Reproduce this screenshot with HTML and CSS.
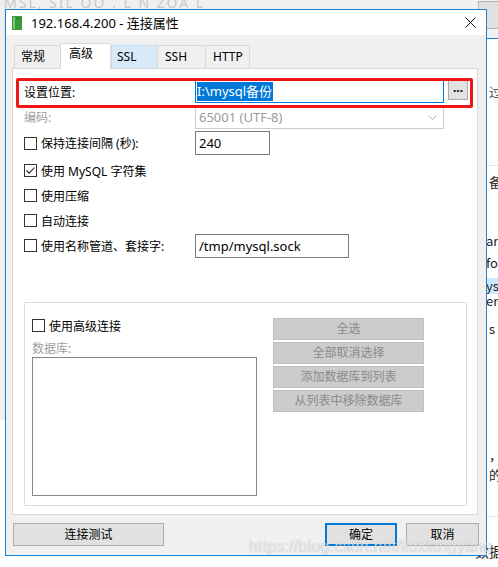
FILE: index.html
```html
<!DOCTYPE html>
<html lang="zh-CN">
<head>
<meta charset="UTF-8">
<title>连接属性</title>
<link rel="stylesheet" href="styles.css">
</head>
<body>

<!-- desktop behind the dialog -->
<div class="bg-top">
  <span class="bg-top-text">MSL, SIL OO . L N ZOA L</span>
  <div class="bg-top-btn"></div>
</div>
<div class="bg-left"></div>
<div class="bg-right">
  <div class="bg-line l1">过</div>
  <div class="bg-sep s1"></div>
  <div class="bg-line l2">备</div>
  <div class="bg-line l3">arc</div>
  <div class="bg-line l4">fo</div>
  <div class="bg-line l5 hl">ys</div>
  <div class="bg-line l6">erf</div>
  <div class="bg-line l7">s</div>
  <div class="bg-line l8">，</div>
  <div class="bg-line l9">的</div>
  <div class="bg-sep s2"></div>
  <div class="bg-line l10">数据</div>
</div>

<div class="dialog">
  <div class="titlebar">
    <svg class="app-icon" width="10" height="14" viewBox="0 0 10 14">
      <rect x="0" y="0" width="10" height="14" fill="#3a9a3a"/>
      <rect x="1" y="1" width="2" height="12" fill="#7cc47c"/>
      <rect x="4" y="2" width="5" height="1" fill="#2b7a2b"/>
    </svg>
    <span class="title">192.168.4.200 - 连接属性</span>
    <svg class="close" width="11" height="11" viewBox="0 0 11 11">
      <path d="M0.5 0.5 L10.5 10.5 M10.5 0.5 L0.5 10.5" stroke="#111" stroke-width="1"/>
    </svg>
  </div>

  <div class="body">
    <div class="tabs">
      <div class="tab t1">常规</div>
      <div class="tab t2 active">高级</div>
      <div class="tab t3 hover">SSL</div>
      <div class="tab t4">SSH</div>
      <div class="tab t5">HTTP</div>
    </div>

    <div class="panel">
      <div class="mark"></div>

      <div class="row r1">
        <span class="label">设置位置:</span>
        <div class="field focus w-long"><span class="sel">I:\mysql备份</span></div>
        <div class="dots">...</div>
      </div>

      <div class="row r2">
        <span class="label dim">编码:</span>
        <div class="field combo w-long">
          <span>65001 (UTF-8)</span>
          <svg width="9" height="5" viewBox="0 0 9 5"><path d="M0.5 0.5 L4.5 4.5 L8.5 0.5" fill="none" stroke="#aaa"/></svg>
        </div>
      </div>

      <div class="row r3">
        <span class="label"><span class="check"></span>保持连接间隔 (秒):</span>
        <div class="field w-short">240</div>
      </div>

      <div class="row r4">
        <span class="label"><span class="check on"><svg width="11" height="11" viewBox="0 0 11 11"><path d="M1.5 5.5 L4.2 8.2 L9.5 2.5" fill="none" stroke="#222" stroke-width="1.1"/></svg></span>使用 MySQL 字符集</span>
      </div>
      <div class="row r5">
        <span class="label"><span class="check"></span>使用压缩</span>
      </div>
      <div class="row r6">
        <span class="label"><span class="check"></span>自动连接</span>
      </div>
      <div class="row r7">
        <span class="label"><span class="check"></span>使用名称管道、套接字:</span>
        <div class="field w-mid">/tmp/mysql.sock</div>
      </div>

      <div class="group">
        <div class="group-left">
          <div class="group-check"><span class="check"></span>使用高级连接</div>
          <div class="db-label">数据库:</div>
          <div class="listbox"></div>
        </div>
        <div class="group-right">
          <div class="gbtn">全选</div>
          <div class="gbtn">全部取消选择</div>
          <div class="gbtn">添加数据库到列表</div>
          <div class="gbtn">从列表中移除数据库</div>
        </div>
      </div>
    </div>

    <div class="footer">
      <div class="btn test">连接测试</div>
      <div class="btn ok">确定</div>
      <div class="btn cancel">取消</div>
    </div>
  </div>
</div>

<div class="watermark">https://blog.csdn.net/liuxiangyang</div>

</body>
</html>
```

FILE: styles.css
```css
html, body {
margin: 0;
padding: 0;
}

body {
position: relative;
width: 498px;
height: 567px;
overflow: hidden;
background: #fff;
font-family: "Noto Sans", "Noto Sans CJK SC", sans-serif;
font-size: 12px;
color: #000;
}

/* Desktop pieces behind the dialog */
.bg-top {
position: absolute;
left: 0;
top: 0;
width: 498px;
height: 38px;
background: #f0f0f0;
border-bottom: 1px solid #1883d7;
}

.bg-top-text {
display: block;
margin: -7px 0 0 4px;
font-size: 14px;
color: #c8c8c8;
letter-spacing: 2px;
}

.bg-top-btn {
position: absolute;
left: 478px;
top: 1px;
width: 22px;
height: 26px;
background: #e1e1e1;
border: 1px solid #b5b5b5;
}

.bg-left {
position: absolute;
left: 0;
top: 0;
width: 4px;
height: 420px;
background: #f0f0f0;
border-right: 1px solid #e3e3e3;
}

.bg-right {
position: absolute;
left: 487px;
top: 39px;
width: 60px;
height: 528px;
font-size: 13px;
font-family: "Noto Sans CJK SC", "Noto Sans", sans-serif;
color: #222;
}

.bg-line {
position: absolute;
left: 2px;
line-height: 16px;
}

.l1 { top: 45px; color: #555; }
.l2 { top: 135px; }
.l3 { top: 194px; left: -1px; }
.l4 { top: 216px; left: -1px; }
.l5 { top: 239px; left: -1px; width: 30px; }
.l6 { top: 254px; left: -1px; }
.l7 { top: 282px; }
.l8 { top: 408px; }
.l9 { top: 428px; }
.l10 { top: 504px; left: -12px; font-size: 14px; }

.hl {
background: #cce8ff;
}

.bg-sep {
position: absolute;
left: 0;
width: 60px;
height: 1px;
background: #e3e3e3;
}

.s1 { top: 126px; }
.s2 { top: 477px; }

/* Dialog window */
.dialog {
position: absolute;
left: 5px;
top: 9px;
width: 480px;
height: 545px;
border: 1px solid #1883d7;
background: #f0f0f0;
}

.titlebar {
display: flex;
align-items: center;
height: 25px;
background: #fff;
}

.app-icon {
margin-left: 6px;
}

.title {
margin-left: 9px;
font-size: 13px;
}

.close {
margin-left: auto;
margin-right: 10px;
}

.body {
padding: 8px 8px 0 6px;
}

/* Tabs */
.tabs {
display: flex;
align-items: flex-end;
height: 25px;
padding-left: 2px;
}

.tab {
position: relative;
box-sizing: border-box;
height: 23px;
padding-left: 6px;
line-height: 22px;
border: 1px solid #d9d9d9;
border-bottom: none;
border-right: none;
background: #f0f0f0;
}

.t1 { width: 46px; }
.t2 { width: 51px; }
.t3 { width: 46px; }
.t4 { width: 48px; padding-left: 7px; }
.t5 { width: 45px; padding-left: 7px; border-right: 1px solid #d9d9d9; }

.tab.active {
height: 26px;
margin-bottom: -1px;
padding-left: 8px;
line-height: 20px;
background: #fff;
border-right: 1px solid #d9d9d9;
z-index: 1;
}

.tab.hover {
background: #d8eaf9;
border-color: #c5dff5;
padding-left: 5px;
}

/* Main panel */
.panel {
position: relative;
box-sizing: border-box;
height: 447px;
padding: 11px 0 0 11px;
background: #fff;
border: 1px solid #d9d9d9;
}

/* red annotation box drawn over the first row */
.mark {
position: absolute;
left: 3px;
top: 9px;
width: 451px;
height: 24px;
border: 3px solid #f01616;
border-radius: 2px;
}

.row {
display: flex;
align-items: center;
height: 25px;
}

.r1 { height: 23px; }
.r2 { height: 24px; margin-top: 2px; }
.r3 { height: 24px; margin-top: 2px; }
.r4 { margin-top: 3px; }

.label {
display: flex;
align-items: center;
flex: none;
width: 171px;
}

.dim {
color: #a0a0a0;
}

.check {
display: inline-flex;
align-items: center;
justify-content: center;
box-sizing: border-box;
width: 13px;
height: 13px;
margin-right: 4px;
border: 1px solid #333;
background: #fff;
}

.field {
display: flex;
align-items: center;
box-sizing: border-box;
height: 24px;
padding-left: 3px;
border: 1px solid #7a7a7a;
background: #fff;
font-size: 13px;
}

.w-long { width: 249px; }
.w-short { width: 75px; }
.w-mid { width: 154px; }

.field.focus {
height: 23px;
border-color: #0078d7;
padding-left: 1px;
}

.sel {
background: #0078d7;
color: #fff;
line-height: 19px;
padding-right: 1px;
}

.field.combo {
justify-content: space-between;
padding-right: 6px;
border-color: #cccccc;
color: #9a9a9a;
}

.dots {
box-sizing: border-box;
width: 20px;
height: 20px;
margin-left: 4px;
align-self: flex-start;
border: 1px solid #adadad;
background: #e1e1e1;
text-align: center;
line-height: 14px;
font-weight: bold;
}

/* Advanced connection group */
.group {
display: flex;
box-sizing: border-box;
width: 443px;
height: 204px;
margin-top: 44px;
padding: 14px 0 0 7px;
border: 1px solid #dcdcdc;
}

.group-left {
width: 225px;
}

.group-check {
display: flex;
align-items: center;
height: 17px;
}

.db-label {
margin-top: 7px;
line-height: 16px;
color: #a0a0a0;
}

.listbox {
box-sizing: border-box;
height: 139px;
border: 1px solid #828790;
}

.group-right {
display: flex;
flex-direction: column;
gap: 2px;
margin: 1px 0 0 16px;
}

.gbtn {
box-sizing: border-box;
width: 151px;
height: 22px;
line-height: 20px;
text-align: center;
background: #cccccc;
border: 1px solid #bfbfbf;
color: #8a8a8a;
}

/* Bottom buttons */
.footer {
display: flex;
gap: 9px;
margin: 8px -1px 0 1px;
}

.btn {
box-sizing: border-box;
height: 23px;
line-height: 21px;
text-align: center;
background: #e1e1e1;
border: 1px solid #adadad;
}

.test { width: 151px; }

.ok {
width: 72px;
margin-left: auto;
border: 2px solid #0078d7;
line-height: 19px;
}

.cancel { width: 73px; }

.watermark {
position: absolute;
left: 249px;
top: 538px;
font-family: "Liberation Sans", sans-serif;
font-size: 16px;
color: rgba(255, 255, 255, 0.7);
text-shadow: 0 0 1px rgba(0, 0, 0, 0.3);
letter-spacing: 0.2px;
}
```
